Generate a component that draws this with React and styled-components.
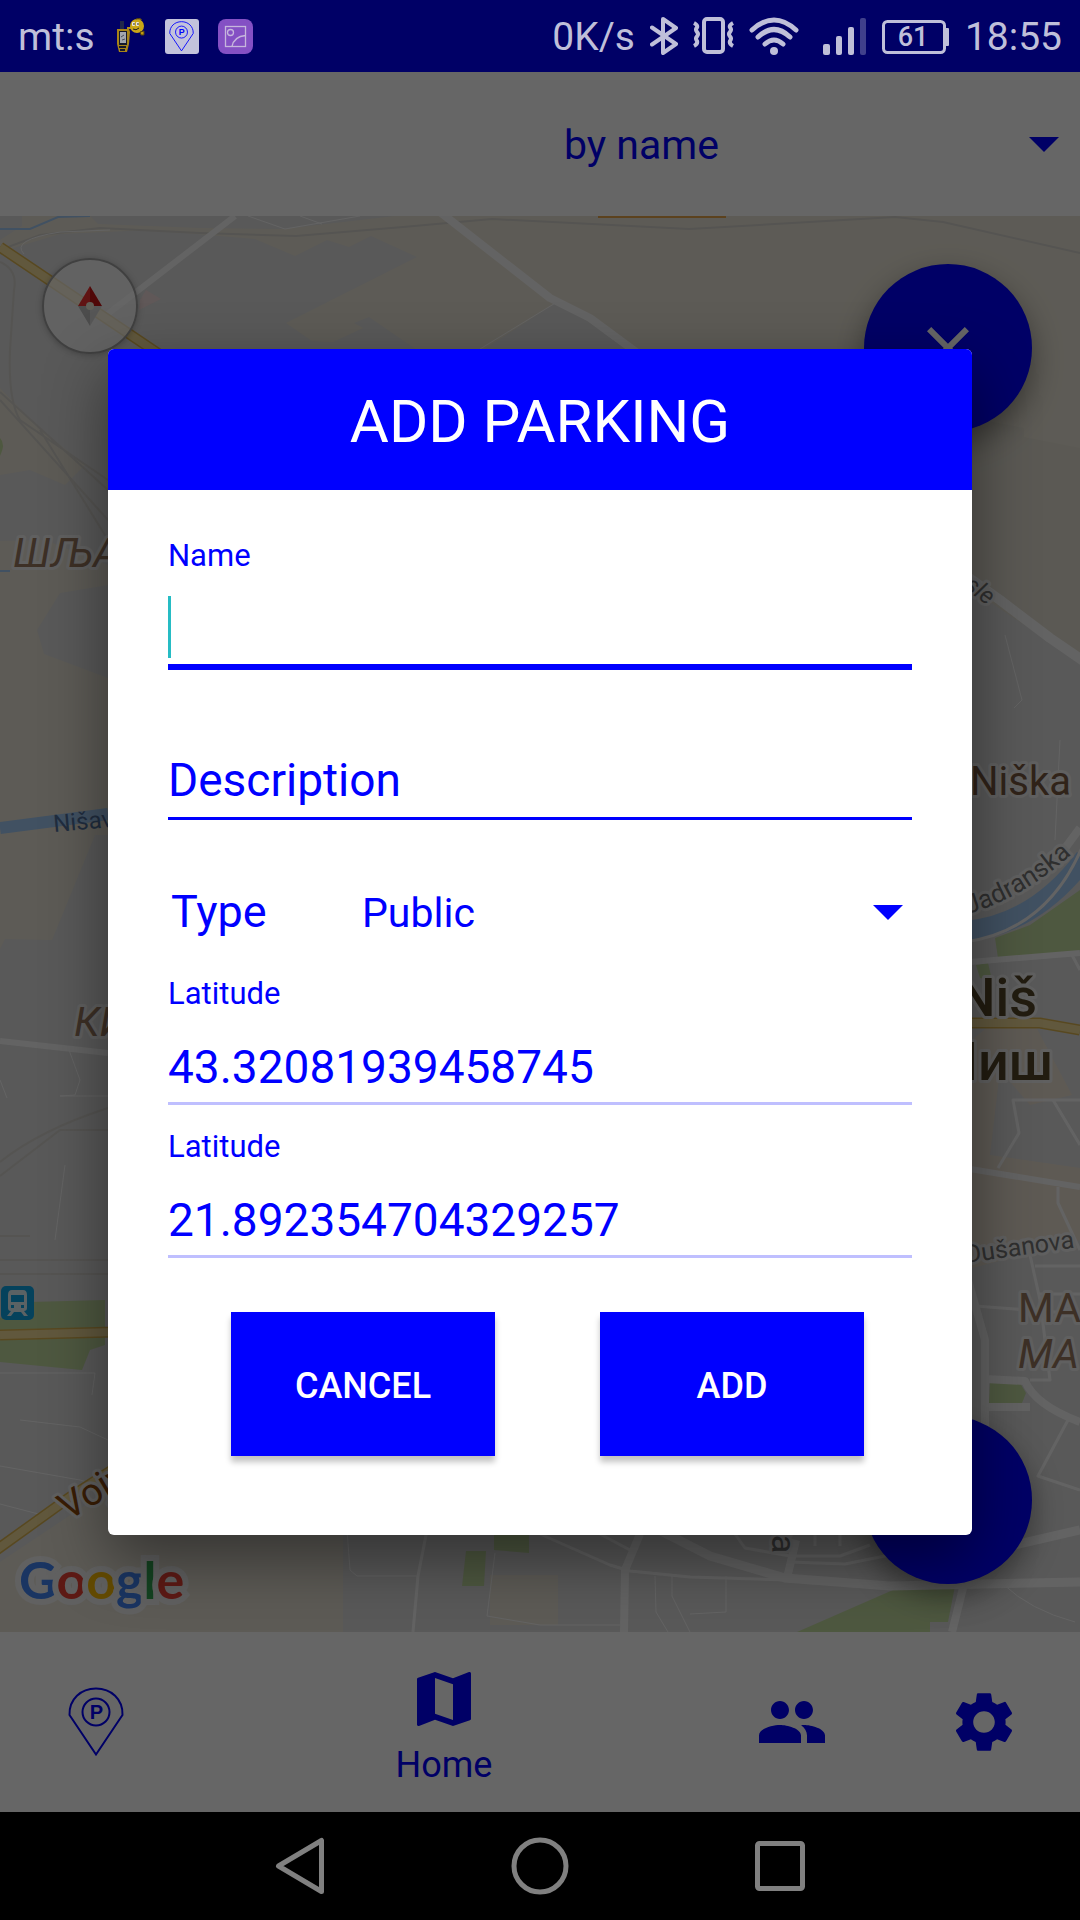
import React from "react";
import styled, { createGlobalStyle } from "styled-components";
import { MdClose, MdMap, MdPeople, MdSettings } from "react-icons/md";

const BLUE = "#0000ff";
const STATUS_INK = "#bfbfd9";

const GlobalStyle = createGlobalStyle`
  *, *::before, *::after { box-sizing: border-box; }
  body { margin: 0; background: #000; }
  body, button, input, select { font-family: Roboto, "Noto Sans", sans-serif; }
  svg { display: block; flex: none; }
`;

const Screen = styled.div`
  min-height: 100vh;
  display: flex;
  flex-direction: column;
`;

const StatusBar = styled.header`
  height: 72px;
  padding: 0 18px;
  display: flex;
  align-items: center;
  justify-content: space-between;
  background: #000066;
  color: ${STATUS_INK};
  font-size: 39px;
  line-height: 48px;
`;

const StatusGroup = styled.div`
  display: flex;
  align-items: center;
  gap: ${(p) => p.$gap}px;
`;

const StatusText = styled.span`
  padding-top: 2px;
`;

const Stage = styled.div`
  flex: 1;
  display: grid;
`;

const Page = styled.div`
  grid-area: 1 / 1;
  display: flex;
  flex-direction: column;
  background: #fff;
`;

const Scrim = styled.div`
  grid-area: 1 / 1;
  z-index: 2;
  display: grid;
  justify-items: center;
  align-items: center;
  background: rgba(0, 0, 0, 0.6);
`;

const Toolbar = styled.div`
  height: 144px;
  display: grid;
  grid-template-columns: 1fr 1fr;
  align-items: center;
`;

const Picker = styled.div`
  grid-column: ${(p) => p.$column};
  display: grid;
  align-items: center;
  color: ${BLUE};

  select {
    grid-area: 1 / 1;
    width: 100%;
    height: 72px;
    padding: 2px 0 0 ${(p) => p.$inset}px;
    border: 0;
    outline: 0;
    appearance: none;
    background: transparent;
    color: inherit;
    font-size: 41px;
  }

  svg {
    grid-area: 1 / 1;
    justify-self: end;
    margin-right: ${(p) => p.$end}px;
    pointer-events: none;
  }
`;

const MapArea = styled.main`
  flex: 1;
  position: relative;
  overflow: hidden;
  min-height: 900px;
`;

const MapCanvas = styled.svg`
  position: absolute;
  inset: 0;
  width: 100%;
  height: 100%;
`;

const Compass = styled.button`
  position: absolute;
  top: 42px;
  left: 42px;
  width: 96px;
  height: 96px;
  padding: 0;
  display: grid;
  place-items: center;
  border: 2px solid #a0a0a0;
  border-radius: 50%;
  background: rgba(255, 255, 255, 0.7);
  box-shadow: 0 1px 6px rgba(0, 0, 0, 0.25);
`;

const Fab = styled.button`
  position: absolute;
  right: 48px;
  ${(p) => p.$edge}: 48px;
  width: 168px;
  height: 168px;
  padding: 0;
  display: grid;
  place-items: center;
  border: 0;
  border-radius: 50%;
  background: ${BLUE};
  color: #fff;
  font-size: 72px;
  box-shadow: 0 12px 30px rgba(0, 0, 0, 0.4);
`;

const MapBrand = styled.div`
  position: absolute;
  left: 19px;
  bottom: 20px;
  font-family: Lato, sans-serif;
  font-size: 52px;
  line-height: 66px;
  font-weight: 700;
  -webkit-text-stroke: 12px #f2f2f2;
  paint-order: stroke fill;
`;

const BrandLetter = styled.span`
  color: ${(p) => p.$color};
`;

const Tabs = styled.nav`
  height: 180px;
  display: grid;
  grid-template-columns: 192fr 504fr 192fr 192fr;
`;

const Tab = styled.button`
  padding: ${(p) => (p.$active ? 4 : 0)}px 0 0;
  display: flex;
  flex-direction: column;
  align-items: center;
  justify-content: center;
  gap: 9px;
  border: 0;
  background: transparent;
  color: ${BLUE};
  font-size: 36px;
  line-height: 42px;
`;

const SystemBar = styled.footer`
  height: 108px;
  display: flex;
  justify-content: center;
  background: #000;
`;

const SystemKey = styled.button`
  width: 240px;
  padding: 0;
  display: grid;
  place-items: center;
  border: 0;
  background: transparent;
`;

const Dialog = styled.form`
  width: 80%;
  border-radius: 6px;
  overflow: hidden;
  background: #fff;
  color: ${BLUE};
  box-shadow: 0 24px 64px rgba(0, 0, 0, 0.45);
`;

const DialogTitle = styled.h1`
  margin: 0;
  padding: 37px 0 32px;
  background: ${BLUE};
  color: #fff;
  font-size: 60px;
  line-height: 72px;
  font-weight: 400;
  text-align: center;
`;

const DialogBody = styled.div`
  padding: 48px 60px 79px;
`;

const Field = styled.div`
  position: relative;
  margin-top: ${(p) => p.$gap || 0}px;
`;

const FieldLabel = styled.label`
  display: block;
  font-size: 31px;
  line-height: 36px;
`;

const TextInput = styled.input`
  display: block;
  width: 100%;
  height: ${(p) => (p.$active ? 96 : 93)}px;
  padding: ${(p) => (p.$muted ? 20 : 16)}px 0 0;
  border: 0;
  border-bottom: ${(p) => (p.$active ? 6 : 3)}px solid ${(p) => (p.$muted ? "#bfbfff" : BLUE)};
  border-radius: 0;
  outline: 0;
  background: transparent;
  color: ${BLUE};
  caret-color: #26bcc4;
  font-size: 46px;

  &::placeholder { color: ${BLUE}; opacity: 1; }
`;

const Caret = styled.span`
  position: absolute;
  left: 0;
  bottom: 12px;
  width: 3px;
  height: 62px;
  background: #26bcc4;
`;

const TypeRow = styled.div`
  margin: 56px 0 28px;
  padding-left: 3px;
  display: grid;
  grid-template-columns: 191px 1fr;
  align-items: center;
`;

const TypeLabel = styled.label`
  font-size: 45px;
  line-height: 72px;
`;

const Actions = styled.div`
  margin-top: 54px;
  padding: 0 48px 0 63px;
  display: grid;
  grid-template-columns: 1fr 1fr;
  gap: 105px;
`;

const ActionButton = styled.button`
  height: 144px;
  padding: 4px 0 0;
  border: 0;
  background: ${BLUE};
  color: #fff;
  font-size: 36px;
  font-weight: 500;
  text-transform: uppercase;
  box-shadow: 0 6px 6px rgba(0, 0, 0, 0.24);
`;

const DropArrow = () => (
  <svg width="30" height="15" viewBox="0 0 30 15" aria-hidden="true">
    <path d="M0 0h30L15 15z" fill="currentColor" />
  </svg>
);

const PinShape = ({ width, height, color, stroke }) => (
  <svg width={width} height={height} viewBox="0 0 56 70" aria-hidden="true">
    <g fill="none" stroke={color} strokeWidth={stroke}>
      <path d="M1.500 28C1 12 13 1.500 28 1.500S55 12 54.500 28L28 67.500z" />
      <circle cx="28" cy="25" r="13.500" />
    </g>
    <text x="28.500" y="32" textAnchor="middle" fill={color} fontFamily="Liberation Sans, sans-serif" fontWeight="700" fontSize="20">P</text>
  </svg>
);

const GpsIcon = () => (
  <svg width="32" height="36" viewBox="0 0 32 36" aria-hidden="true">
    <rect x="6" y="3" width="4" height="9" fill="#22284a" />
    <path d="M3 11h12l1 3-1 12-2 8H5L3 26z" fill="#a88418" />
    <rect x="5" y="13" width="8" height="14" fill="#15182c" />
    <rect x="6" y="14" width="6" height="11" fill="#a3a6ae" />
    <path d="M7 19l3-2M8 22l3-1" stroke="#484c58" strokeWidth="1" />
    <path d="M5 29h7M6 32h5" stroke="#16182c" strokeWidth="2" />
    <path d="M13 10h6" stroke="#b39015" strokeWidth="2" />
    <circle cx="23" cy="8" r="7" fill="#c9a616" />
    <path d="M22 1q4-2 6 1M26 14l4-1v4h-3z" fill="#c09a10" stroke="#504010" strokeWidth="1" />
    <rect x="18" y="4" width="3" height="4" rx="1" fill="#ece9dc" />
    <rect x="22" y="4" width="3" height="4" rx="1" fill="#ece9dc" />
    <path d="M20 5v2M24 5v2M19 11q3 2 6-1" stroke="#222" fill="none" />
  </svg>
);

const PinTile = styled.span`
  width: 34px;
  height: 35px;
  display: grid;
  place-items: center;
  border-radius: 3px;
  background: #c3c3dc;
`;

const PhotoTile = () => (
  <svg width="35" height="35" viewBox="0 0 35 35" aria-hidden="true">
    <rect width="35" height="35" rx="8" fill="#8450c4" />
    <g fill="none" stroke="#c6b6dd" strokeWidth="1.300">
      <rect x="7.500" y="7.500" width="20" height="20" />
      <circle cx="12.500" cy="13.500" r="3" />
      <path d="M14 27.500q2-10 13.500-11" />
    </g>
  </svg>
);

const BluetoothIcon = () => (
  <svg width="28" height="40" viewBox="0 0 28 40" fill="none" stroke={STATUS_INK} strokeWidth="4" strokeLinejoin="round" strokeLinecap="round" aria-hidden="true">
    <path d="M2 11.500L26 28 13 37V3l13 9L2 28.500" />
  </svg>
);

const VibrateIcon = () => (
  <svg width="41" height="40" viewBox="0 0 41 40" fill="none" stroke={STATUS_INK} strokeWidth="4" aria-hidden="true">
    <rect x="11" y="3" width="19" height="33" rx="3" />
    <path d="M1 7q4 2 3 4.500q-2 2 0 4.500q2 2 0 4.500q-2 2 0 4.500q1 3-3 5M40 7q-4 2-3 4.500q2 2 0 4.500q-2 2 0 4.500q2 2 0 4.500q-1 3 3 5" strokeWidth="4" />
  </svg>
);

const WifiIcon = () => (
  <svg width="50" height="40" viewBox="0 0 50 40" fill="none" stroke={STATUS_INK} strokeWidth="5" strokeLinecap="round" aria-hidden="true">
    <path d="M3 14Q25-6 47 14M9 21Q25 6 41 21M16 28Q25 20 34 28" />
    <circle cx="25" cy="35" r="4" fill={STATUS_INK} stroke="none" />
  </svg>
);

const SignalIcon = () => (
  <svg width="53" height="40" viewBox="-9 0 53 40" fill={STATUS_INK} aria-hidden="true">
    <rect x="0" y="28" width="7" height="11" rx="2" />
    <rect x="13" y="20" width="6" height="19" rx="2" />
    <rect x="25" y="11" width="6" height="28" rx="2" />
    <rect x="37" y="2" width="6" height="37" rx="2" fill="#40408c" />
  </svg>
);

const BatteryIcon = () => (
  <svg width="68" height="40" viewBox="0 -4 68 40" aria-hidden="true">
    <rect x="1.500" y="1.500" width="61" height="31" rx="4" fill="none" stroke={STATUS_INK} strokeWidth="3" />
    <rect x="63" y="8" width="4" height="18" rx="1" fill={STATUS_INK} />
    <text x="31" y="26" textAnchor="middle" fill={STATUS_INK} fontFamily="Roboto, sans-serif" fontWeight="500" fontSize="27">61</text>
  </svg>
);

const halo = { stroke: "#f0f0f0", strokeWidth: 6, strokeLinejoin: "round", paintOrder: "stroke" };

const CityMap = () => (
  <MapCanvas viewBox="0 216 1080 1416" preserveAspectRatio="xMidYMid slice" fontFamily="Roboto, sans-serif" aria-label="Map of Niš">
    <rect y="216" width="1080" height="1416" fill="#dedede" />

    <g fill="#e9e4d6">
      <path d="M22 216H90L98 224L200 228L283 229L395 216H1080V662L1050 642L960 580L632 349L557 302L480 352H420L369 317L354 323L363 328L333 342L312 341L286 323L417 257L371 236L349 247L327 240L295 256L255 239L150 230L60 234L0 252V240L22 226z" />
      <path d="M0 388L40 430L60 445L85 465L65 485L30 470L0 475z" />
      <path d="M0 541L45 540L108 565V835H95L52 940L5 939L0 949z" />
      <path d="M0 1562L108 1490L343 1534V1632H0z" />
      <path d="M490 1575h68v50h-68z" />
    </g>
    <path d="M37 630L60 593L108 585V678L44 654z" fill="#dedede" />
    <path d="M972 418L1024 428V437L1080 448V662L972 590z" fill="#e3dfd2" />
    <path d="M972 1040L990 1025H1035L1072 1095L1030 1105L1000 1070L990 1155L1080 1168V1240L972 1268z" fill="#ece1d2" />

    <g fill="#c3dca0">
      <path d="M0 1318L30 1302L105 1300V1345L90 1350L82 1370L0 1362z" />
      <path d="M494 1530H529V1553L494 1550zM466 1551H486L484 1586H462z" />
      <path d="M797 1632L893 1590L955 1586L948 1622H930V1632z" />
      <path d="M995 938L1030 925L1080 890V953L998 958zM976 965L988 963L992 980L980 978z" />
      <path d="M990 1383H1020L1026 1393L1022 1403H989z" />
      <path d="M0 438q6 6 0 18z" />
    </g>

    <g fill="none" stroke="#a3caf4">
      <path d="M0 828L108 814" strokeWidth="12" />
      <path d="M965 931Q1035 925 1085 858" strokeWidth="20" />
      <path d="M0 229H30L58 217L90 216M0 571H10" strokeWidth="2" />
    </g>
    <path d="M598 217H726" stroke="#e5a64c" strokeWidth="2" />

    <g fill="none" stroke="#d4d2cc" strokeWidth="2">
      <path d="M0 250L40 235L100 228L200 233L296 236L403 227L492 219L592 224L689 229L792 223L895 217L943 222L1080 253" />
      <path d="M0 262Q18 270 14 290L10 350Q8 400 20 420L108 480M0 392L108 490M0 400L108 520M40 430L108 540" />
      <path d="M0 1162Q40 1130 108 1108M0 1176L60 1130H108M0 1236H30M0 1260H108M0 1274H108" />
    </g>

    <g fill="none" stroke="#f8f8f8" strokeLinejoin="round">
      <path d="M235 216L105 316" strokeWidth="6" />
      <path d="M440 212L550 298L590 318L636 352" strokeWidth="8" />
      <path d="M248 216L285 229L360 216M300 216L322 224M24 254Q10 240 60 232L110 230M480 349L557 302" strokeWidth="1" />
      <path d="M0 1041L108 1053" strokeWidth="6" />
      <path d="M69 1050L80 1080L75 1095L60 1096H108M0 1466L80 1480L108 1488M0 1504L50 1517M0 1373H95L92 1395M20 1420L80 1427L108 1440M65 1165L55 1240M0 1080L7 1098" strokeWidth="1" />
      <path d="M965 575L1000 600L1050 638L1085 662" strokeWidth="10" />
      <path d="M1005 635L1022 700L1014 708M1060 740L1055 840" strokeWidth="1" />
      <path d="M965 942Q1050 930 1085 840" strokeWidth="3" />
      <path d="M1060 855L1080 828" strokeWidth="8" />
      <path d="M970 962L1080 953M970 1169L1080 1187" strokeWidth="6" />
      <path d="M1080 1100H1013L1019 1133L998 1168M1053 1100L1080 1145M1058 1187V1203L1080 1250M1072 955L1080 970M1030 1255L1040 1300L1050 1380H1030M1035 1266H1080M975 1306L1080 1314M1040 1294H1080M1068 1420L1038 1476L1080 1490" strokeWidth="3" />
      <path d="M968 1280L985 1340V1430M985 1379L1025 1381Q1035 1405 1080 1422M985 1407H1030" strokeWidth="8" />
      <path d="M1010 1546L1080 1530" strokeWidth="9" />
      <path d="M347 1530L350 1570L357 1576H418M495 1553L487 1616L540 1625H620M655 1576L656 1612L668 1632M672 1576V1596L690 1632M726 1576V1612L690 1614M1003 1584Q1030 1610 1075 1622" strokeWidth="1" />
      <path d="M427 1530L418 1576L413 1632M540 1534L610 1565L630 1571L690 1577L790 1580M600 1534L630 1550M735 1534L745 1548L790 1556H840L870 1545M790 1562L845 1564L890 1555M815 1530V1546M840 1530V1546" strokeWidth="3" />
      <path d="M640 1534L625 1570L624 1632M796 1540L787 1578M964 1584L952 1632" strokeWidth="8" />
      <path d="M655 1528L710 1556L785 1578L890 1586L1080 1582" strokeWidth="9" />
    </g>

    <g fill="none">
      <path d="M0 247L165 358M0 1335L115 1332M-5 1551L70 1497L115 1468M965 1023H1040L1080 1030" stroke="#dcb552" strokeWidth="11" />
      <path d="M0 247L165 358M0 1335L115 1332M-5 1551L70 1497L115 1468M965 1023H1040L1080 1030" stroke="#f3dd9a" strokeWidth="8" />
    </g>
    <path d="M140 300L146 290L161 299L139 310z" fill="#f0dcdc" />

    <g {...halo} fill="#98785f" fontSize="41">
      <text x="13" y="567" fontStyle="italic">ШЉАКА</text>
      <text x="74" y="1036" fontStyle="italic">КИ</text>
      <text x="970" y="795" fontSize="40" fill="#78583f">Niška</text>
      <text x="1018" y="1322">МА</text>
      <text x="1018" y="1368" fontStyle="italic">МА</text>
    </g>
    <g {...halo} fill="#55482a" fontSize="54" fontWeight="500" textAnchor="end">
      <text x="1037" y="1016">Niš</text>
      <text x="1053" y="1080">Ниш</text>
    </g>
    <text x="54" y="832" fontSize="24" fill="#50719f" transform="rotate(-5 54 832)">Nišava</text>
    <g {...halo} fill="#757575">
      <path id="quay" d="M968 914Q1030 896 1085 842" fill="none" stroke="none" />
      <text fontSize="26"><textPath href="#quay">Jadranska</textPath></text>
      <text x="966" y="1263" fontSize="25" transform="rotate(-8 966 1263)">Dušanova</text>
      <text x="944" y="574" fontSize="24" fontStyle="italic" transform="rotate(36 944 574)">vasle</text>
      <text x="772" y="1524" fontSize="34" transform="rotate(90 772 1524)">ra</text>
    </g>
    <text {...halo} x="68" y="1521" fontSize="38" fill="#8e4a0c" transform="rotate(-31 68 1521)">Vojvode</text>

    <rect x="1" y="1286" width="33" height="34" rx="5" fill="#0ea6e6" />
    <path fillRule="evenodd" d="M12 1290H23Q27 1290 27 1295V1308Q27 1311 24 1311L28 1316H24L21 1312H14L11 1316H7L11 1311Q8 1311 8 1308V1295Q8 1290 12 1290zM11 1295V1302H24V1295zM11 1305V1308H14V1305zM21 1305V1308H24V1305z" fill="#e4f4fa" />
  </MapCanvas>
);

const BRAND = [
  ["G", "#4285f4"],
  ["o", "#ea4335"],
  ["o", "#fbbc05"],
  ["g", "#4285f4"],
  ["l", "#34a853"],
  ["e", "#ea4335"],
];

export default function App() {
  return (
    <>
      <GlobalStyle />
      <Screen>
        <StatusBar>
          <StatusGroup $gap={19}>
            <StatusText>mt:s</StatusText>
            <GpsIcon />
            <PinTile><PinShape width={25} height={31} color={BLUE} stroke={2} /></PinTile>
            <PhotoTile />
          </StatusGroup>
          <StatusGroup $gap={15}>
            <StatusText>0K/s</StatusText>
            <BluetoothIcon />
            <VibrateIcon />
            <WifiIcon />
            <SignalIcon />
            <BatteryIcon />
            <StatusText>18:55</StatusText>
          </StatusGroup>
        </StatusBar>

        <Stage>
          <Page>
            <Toolbar>
              <Picker $column={2} $inset={24} $end={21}>
                <select aria-label="Search mode" defaultValue="name">
                  <option value="name">by name</option>
                </select>
                <DropArrow />
              </Picker>
            </Toolbar>
            <MapArea>
              <CityMap />
              <Compass type="button" aria-label="Reset north">
                <svg width="24" height="40" viewBox="0 0 24 40" aria-hidden="true">
                  <path d="M12 0L0 20h12z" fill="#f03030" />
                  <path d="M12 0l12 20H12z" fill="#c81414" />
                  <path d="M12 40L0 20h12z" fill="#bdbdbd" />
                  <path d="M12 40l12-20H12z" fill="#d8d8d8" />
                  <circle cx="12" cy="20" r="4" fill="#f0ead8" />
                </svg>
              </Compass>
              <Fab type="button" $edge="top" aria-label="Close"><MdClose /></Fab>
              <Fab type="button" $edge="bottom" aria-label="My location" />
              <MapBrand>
                {BRAND.map(([letter, color], i) => (
                  <BrandLetter key={i} $color={color}>{letter}</BrandLetter>
                ))}
              </MapBrand>
            </MapArea>
            <Tabs>
              <Tab type="button" aria-label="Parking"><PinShape width={56} height={70} color={BLUE} stroke={2} /></Tab>
              <Tab type="button" $active><MdMap size={72} />Home</Tab>
              <Tab type="button" aria-label="Friends"><MdPeople size={72} /></Tab>
              <Tab type="button" aria-label="Settings"><MdSettings size={72} /></Tab>
            </Tabs>
          </Page>

          <Scrim>
            <Dialog role="dialog" aria-labelledby="dialog-title" onSubmit={(e) => e.preventDefault()}>
              <DialogTitle id="dialog-title">ADD PARKING</DialogTitle>
              <DialogBody>
                <Field>
                  <FieldLabel htmlFor="name">Name</FieldLabel>
                  <TextInput id="name" $active />
                  <Caret />
                </Field>
                <Field $gap={57}>
                  <TextInput placeholder="Description" aria-label="Description" />
                </Field>
                <TypeRow>
                  <TypeLabel htmlFor="type">Type</TypeLabel>
                  <Picker $column={2} $inset={0} $end={9}>
                    <select id="type" defaultValue="public">
                      <option value="public">Public</option>
                    </select>
                    <DropArrow />
                  </Picker>
                </TypeRow>
                <Field>
                  <FieldLabel htmlFor="lat">Latitude</FieldLabel>
                  <TextInput id="lat" defaultValue="43.32081939458745" $muted />
                </Field>
                <Field $gap={24}>
                  <FieldLabel htmlFor="lng">Latitude</FieldLabel>
                  <TextInput id="lng" defaultValue="21.892354704329257" $muted />
                </Field>
                <Actions>
                  <ActionButton type="button">Cancel</ActionButton>
                  <ActionButton type="submit">Add</ActionButton>
                </Actions>
              </DialogBody>
            </Dialog>
          </Scrim>
        </Stage>

        <SystemBar>
          <SystemKey type="button" aria-label="Back">
            <svg width="50" height="58" viewBox="0 0 50 58" fill="none" stroke="#808080" strokeWidth="5" strokeLinejoin="round"><path d="M46.500 3.500v51L3.500 29z" /></svg>
          </SystemKey>
          <SystemKey type="button" aria-label="Home">
            <svg width="58" height="58" viewBox="0 0 58 58" fill="none" stroke="#808080" strokeWidth="5"><circle cx="29" cy="29" r="26" /></svg>
          </SystemKey>
          <SystemKey type="button" aria-label="Recent apps">
            <svg width="50" height="50" viewBox="0 0 50 50" fill="none" stroke="#808080" strokeWidth="5"><rect x="2.500" y="2.500" width="45" height="45" rx="2" /></svg>
          </SystemKey>
        </SystemBar>
      </Screen>
    </>
  );
}
